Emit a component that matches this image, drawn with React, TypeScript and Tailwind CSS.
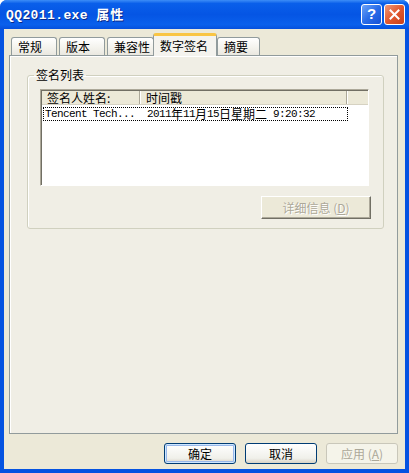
import React from "react";

const cjk = "font-['Noto_Sans_CJK_SC','Liberation_Sans',sans-serif]";
const mono = "font-['Liberation_Mono','Noto_Sans_CJK_SC',monospace]";

const Tab: React.FC<{ label: string; w: string; active?: boolean; className?: string }> = ({
  label,
  w,
  active,
  className = "",
}) => {
  if (active) {
    return (
      <div
        className={`relative z-10 ${w} h-[23px] -mb-px flex items-start pt-[2px] pl-[6px] text-[12px] leading-[16px] text-black rounded-t-[3px] border-x border-[#919B9C] bg-[#F4F3EE] border-t-[3px] border-t-[#F9C544] ${className}`}
      >
        {label}
      </div>
    );
  }
  return (
    <div
      className={`${w} h-[18px] flex items-start pt-[1px] pl-[6px] text-[12px] leading-[16px] text-black rounded-t-[3px] border border-b-0 border-[#919B9C] bg-[linear-gradient(180deg,#FFFFFF,#F3F2EC_60%,#EAE8E0)] ${className}`}
    >
      {label}
    </div>
  );
};

const XPButton: React.FC<{ children: React.ReactNode; isDefault?: boolean; disabled?: boolean }> = ({
  children,
  isDefault,
  disabled,
}) => (
  <button
    className={`w-[72px] h-[21px] rounded-[3px] text-[12px] leading-[14px] flex items-center justify-center ${
      disabled
        ? "border border-[#C9C7BA] bg-[#F5F4EA] text-[#ACA899]"
        : "border border-[#003C74] bg-[linear-gradient(180deg,#FFFFFF,#F0F0EA_75%,#D8D2C6)] text-black"
    } ${isDefault ? "shadow-[inset_0_0_0_1px_#CEE7FF,inset_0_0_0_2px_#98B8EA]" : ""}`}
  >
    {children}
  </button>
);

export default function App() {
  return (
    <div className={`w-[409px] h-[473px] flex flex-col bg-[#0553E1] rounded-t-[7px] overflow-hidden ${cjk}`}>
      {/* Title bar */}
      <div className="h-[29px] shrink-0 flex items-center justify-between pl-[6px] pr-[4px] bg-[linear-gradient(180deg,#3D8DF7_0%,#0A5FEA_12%,#0555E4_50%,#0A60EC_85%,#0550DD_100%)]">
        <span className={`${mono} font-bold text-[13px] text-white [text-shadow:1px_1px_0_#0A2A8A] tracking-[0.4px]`}>
          QQ2011.exe <span className={`${cjk} tracking-[1px]`}>属性</span>
        </span>
        <div className="flex gap-[2px] items-center">
          <div className="w-[21px] h-[21px] rounded-[3px] border border-white bg-[linear-gradient(135deg,#6CA3F8,#2A6DE8_50%,#1550D6)] flex items-center justify-center text-white font-bold text-[15px] font-['Liberation_Sans',sans-serif]">
            ?
          </div>
          <div className="w-[21px] h-[21px] rounded-[3px] border border-white bg-[linear-gradient(135deg,#F09A7A,#E2582E_50%,#C8401A)] flex items-center justify-center">
            <svg width="11" height="11" viewBox="0 0 11 11">
              <path d="M1.5 1.5 L9.5 9.5 M9.5 1.5 L1.5 9.5" stroke="white" strokeWidth="2" strokeLinecap="square" />
            </svg>
          </div>
        </div>
      </div>

      {/* Client area */}
      <div className="flex-1 mx-[4px] mb-[4px] bg-[#ECE9D8] flex flex-col pt-[4px] pl-[5px] pr-[7px]">
        {/* Tabs */}
        <div className="h-[22px] flex items-end pl-[2px]">
          <Tab label="常规" w="w-[46px]" />
          <Tab label="版本" w="w-[46px]" className="ml-[2px]" />
          <Tab label="兼容性" w="w-[47px]" className="ml-[2px]" />
          <Tab label="数字签名" w="w-[64px]" active className="-ml-px" />
          <Tab label="摘要" w="w-[43px]" />
        </div>

        {/* Panel */}
        <div className="h-[379px] border border-[#919B9C] bg-[#F0EEE5] shadow-[inset_1px_1px_0_#FFFFFF] pt-[12px] pl-[17px] pr-[13px]">
          <fieldset className="h-[161px] border border-[#D0D0BF] rounded-[3px] shadow-[inset_1px_1px_0_#FFFFFF] p-0 m-0 min-w-0">
            <legend className="ml-[6px] px-[2px] text-[12px] leading-[14px] text-black">签名列表</legend>

            {/* List view */}
            <div className="mt-[7px] ml-[12px] mr-[14px] h-[97px] border border-[#ACA899] border-r-white border-b-white shadow-[inset_1px_1px_0_#716F64] bg-white flex flex-col pl-[1px] pt-[1px]">
              <div className="h-[14px] flex bg-[#ECE9D8] border-b border-[#D6D2C2] text-[12px] leading-[13px] text-black">
                <div className="w-[98px] pl-[5px] border-r border-[#ACA899]">签名人姓名:</div>
                <div className="w-[207px] pl-[6px] border-r border-[#ACA899] shadow-[inset_1px_0_0_#FFFFFF]">时间戳</div>
                <div className="flex-1 shadow-[inset_1px_0_0_#FFFFFF]" />
              </div>
              <div className="mt-[2px] ml-[1px] w-[305px] h-[14px] border border-dotted border-black flex items-center text-[12px] leading-[12px] text-black">
                <span className={`${mono} w-[103px] pl-[1px] text-[11px] tracking-[-0.6px]`}>Tencent Tech...</span>
                <span className="flex items-center">
                  <span className={`${mono} text-[11px] tracking-[-0.6px]`}>2011</span>年
                  <span className={`${mono} text-[11px] tracking-[-0.6px]`}>11</span>月
                  <span className={`${mono} text-[11px] tracking-[-0.6px]`}>15</span>日星期二
                  <span className={`${mono} text-[11px] tracking-[-0.6px] whitespace-pre`}> 9:20:32</span>
                </span>
              </div>
            </div>

            <div className="flex justify-end mr-[12px] mt-[10px]">
              <div className="w-[110px] h-[23px] bg-[#ECE9D8] border border-[#FFFFFF] border-r-[#716F64] border-b-[#716F64] shadow-[inset_-1px_-1px_0_#ACA899] flex items-center justify-center text-[12px] text-[#ACA899] [text-shadow:1px_1px_0_#FFFFFF]">
                详细信息 (<span className="underline">D</span>)
              </div>
            </div>
          </fieldset>
        </div>

        {/* Buttons */}
        <div className="mt-[9px] flex justify-end gap-[9px]">
          <XPButton isDefault>确定</XPButton>
          <XPButton>取消</XPButton>
          <XPButton disabled>
            应用 (<span className="underline">A</span>)
          </XPButton>
        </div>
      </div>
    </div>
  );
}
